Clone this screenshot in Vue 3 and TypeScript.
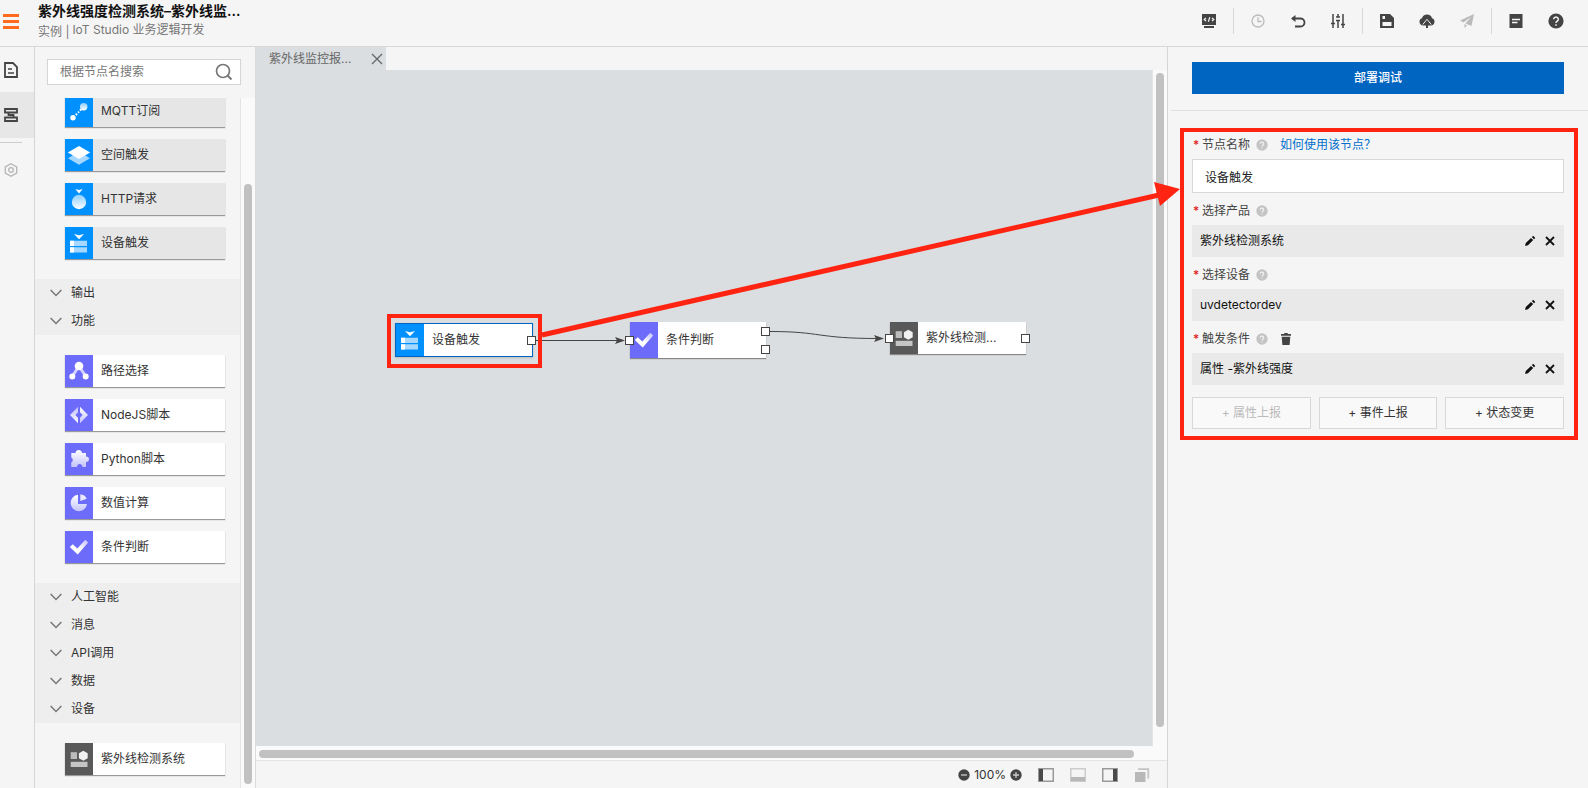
<script setup lang="ts">
import { ref } from 'vue'

interface PaletteNode {
  label: string
  icon: string
  tone: 'blue' | 'purple' | 'dark'
}
interface Group {
  titles: string[]
  nodes: PaletteNode[]
}
interface Port {
  x: number
  y: number
}
interface FlowNode extends PaletteNode {
  x: number
  y: number
  height: number
  selected?: boolean
  ports: Port[]
}
interface Field {
  label: string
  value: string
  removable?: boolean
}

const search = ref('')
const nodeName = ref('设备触发')

const groups: Group[] = [
  {
    titles: [],
    nodes: [
      { label: 'MQTT订阅', icon: 'mqtt', tone: 'blue' },
      { label: '空间触发', icon: 'space', tone: 'blue' },
      { label: 'HTTP请求', icon: 'http', tone: 'blue' },
      { label: '设备触发', icon: 'device', tone: 'blue' },
    ],
  },
  {
    titles: ['输出', '功能'],
    nodes: [
      { label: '路径选择', icon: 'path', tone: 'purple' },
      { label: 'NodeJS脚本', icon: 'code', tone: 'purple' },
      { label: 'Python脚本', icon: 'puzzle', tone: 'purple' },
      { label: '数值计算', icon: 'pie', tone: 'purple' },
      { label: '条件判断', icon: 'check', tone: 'purple' },
    ],
  },
  {
    titles: ['人工智能', '消息', 'API调用', '数据', '设备'],
    nodes: [{ label: '紫外线检测系统', icon: 'system', tone: 'dark' }],
  },
]

const flow: FlowNode[] = [
  { label: '设备触发', icon: 'device', tone: 'blue', x: 139, y: 253, height: 34, selected: true, ports: [{ x: 132, y: 13 }] },
  { label: '条件判断', icon: 'check', tone: 'purple', x: 374, y: 252, height: 36, ports: [{ x: -5, y: 14 }, { x: 131, y: 5 }, { x: 131, y: 23 }] },
  { label: '紫外线检测...', icon: 'system', tone: 'dark', x: 634, y: 252, height: 32, ports: [{ x: -5, y: 12 }, { x: 131, y: 12 }] },
]

const toolbar = [
  [{ icon: 'monitor', label: '预览', off: false }],
  [
    { icon: 'clock', label: '历史', off: true },
    { icon: 'undo', label: '撤销', off: false },
    { icon: 'sliders', label: '配置', off: false },
  ],
  [
    { icon: 'save', label: '保存', off: false },
    { icon: 'cloud', label: '部署', off: false },
    { icon: 'plane', label: '发布', off: true },
  ],
  [
    { icon: 'note', label: '文档', off: false },
    { icon: 'help', label: '帮助', off: false },
  ],
]

const fields: Field[] = [
  { label: '选择产品', value: '紫外线检测系统' },
  { label: '选择设备', value: 'uvdetectordev' },
  { label: '触发条件', value: '属性 -紫外线强度', removable: true },
]

const views = [
  { icon: 'left', label: '左侧面板', off: false },
  { icon: 'bottom', label: '底部面板', off: true },
  { icon: 'right', label: '右侧面板', off: false },
  { icon: 'copy', label: '窗口', off: true },
]
</script>

<template>
  <div class="app">
    <svg class="sprite" aria-hidden="true">
      <defs>
        <linearGradient id="g-down" x1="0" y1="0" x2="0" y2="1">
          <stop offset="0" stop-color="#fff" />
          <stop offset="1" stop-color="#fff" stop-opacity="0.6" />
        </linearGradient>
        <linearGradient id="g-up" x1="0" y1="1" x2="0" y2="0">
          <stop offset="0" stop-color="#fff" />
          <stop offset="1" stop-color="#fff" stop-opacity="0.55" />
        </linearGradient>
        <linearGradient id="g-side" x1="0" y1="1" x2="1" y2="0">
          <stop offset="0.45" stop-color="#fff" />
          <stop offset="1" stop-color="#fff" stop-opacity="0.55" />
        </linearGradient>
        <symbol id="i-mqtt" viewBox="0 0 28 32">
          <circle cx="18.7" cy="11.7" r="3.7" fill="url(#g-up)" />
          <circle cx="8" cy="22.8" r="2.7" fill="#fff" />
          <path d="M10.8 20l1.2-1.2M13 17.6l1-1M15 15.5l1-1" stroke="#fff" stroke-width="2" />
        </symbol>
        <symbol id="i-space" viewBox="0 0 28 32">
          <path d="M14 12.5l11 6.7-11 6.6-11-6.6z" fill="#fff" opacity="0.65" />
          <path d="M14 7l11.2 6.5L14 20 2.8 13.5z" fill="#fff" />
        </symbol>
        <symbol id="i-http" viewBox="0 0 28 32">
          <path d="M10.3 6l3.7 1 3.7-1L14 10.6z" fill="#fff" />
          <circle cx="14" cy="19" r="7.2" fill="url(#g-up)" />
        </symbol>
        <symbol id="i-device" viewBox="0 0 28 32">
          <path d="M9 7l5 1.3L19 7l-5 5.3z" fill="#fff" />
          <path d="M5 13.7h17v5.4H5zM5 20.2h17v5.3H5z" fill="#fff" opacity="0.65" />
          <path d="M5 13.7h4v5.4H5zM5 20.2h4v5.3H5z" fill="#fff" />
        </symbol>
        <symbol id="i-path" viewBox="0 0 28 32">
          <path d="M14 11L7.5 21M14 11l6.5 10" stroke="#fff" stroke-opacity="0.7" stroke-width="3" />
          <circle cx="14" cy="11" r="4.3" fill="#fff" />
          <circle cx="7.3" cy="21.5" r="3" fill="#fff" />
          <circle cx="20.7" cy="21.5" r="3" fill="#fff" />
        </symbol>
        <symbol id="i-code" viewBox="0 0 28 32">
          <path d="M13 7.8v5.5L10.4 16l2.6 2.7v5.5L5 16z" fill="url(#g-up)" />
          <path d="M15 7.8v5.5l2.6 2.7-2.6 2.7v5.5L23 16z" fill="url(#g-down)" />
        </symbol>
        <symbol id="i-puzzle" viewBox="0 0 28 32">
          <path d="M6.3 10h4.2c0-4 6.5-4 6.500 0h4v3.500c4 0 4 5.500 0 5.500v5h-3.600c0-4-5.400-4-5.400 0H6.300v-4.500c2-1 2-4 0-5z" fill="url(#g-down)" />
        </symbol>
        <symbol id="i-pie" viewBox="0 0 28 32">
          <path d="M13 7.800V17h9a8.200 8.200 0 1 1-9-9.200z" fill="url(#g-down)" />
          <path d="M15.300 7.300V14l6.400-2.200c-1-2.700-3.400-4.300-6.400-4.500z" fill="#fff" opacity="0.850" />
        </symbol>
        <symbol id="i-check" viewBox="0 0 28 32">
          <path d="M4.800 16l3-2.800 4.500 4.300 8-8.700 2.900 2.700-10.500 11.900z" fill="url(#g-side)" />
        </symbol>
        <symbol id="i-system" viewBox="0 0 28 32">
          <path d="M5.700 9.200H12V16H5.700z" fill="#fff" opacity="0.600" />
          <path d="M18.300 7.700l4.400 2.500v5l-4.400 2.500-4.400-2.500v-5z" fill="#fff" opacity="0.920" />
          <path d="M5.700 18.800h16.800V24H5.700z" fill="#fff" opacity="0.650" />
        </symbol>

        <symbol id="i-monitor" viewBox="0 0 16 16">
          <path d="M1 1h14v11H1z" fill="currentColor" />
          <path d="M3 13h10v2H3z" fill="currentColor" />
          <path d="M5 5L3.200 6.500 5 8M11 5l1.800 1.500L11 8M8.800 4.300L7.300 8.700" fill="none" stroke="#f5f5f5" stroke-width="1.200" />
          <path d="M1 12.500h14" stroke="#f5f5f5" stroke-width="0.800" />
        </symbol>
        <symbol id="i-clock" viewBox="0 0 16 16">
          <circle cx="8" cy="8" r="6" fill="none" stroke="currentColor" stroke-width="1.300" />
          <path d="M8 4.300V8.500h3.500" fill="none" stroke="currentColor" stroke-width="1.300" />
        </symbol>
        <symbol id="i-undo" viewBox="0 0 16 16">
          <path d="M2.500 5.500h8a4 4 0 0 1 0 8H5" fill="none" stroke="currentColor" stroke-width="1.800" />
          <path d="M5.500 2L1 5.500 5.500 9z" fill="currentColor" />
        </symbol>
        <symbol id="i-sliders" viewBox="0 0 16 16">
          <path d="M3 1v14M8 1v3M8 7.500V15M13 1v14" stroke="currentColor" stroke-width="1.500" />
          <path d="M1 10.500h4M6 7.500h4M11 11.500h4M6 4h4" stroke="currentColor" stroke-width="1.600" />
        </symbol>
        <symbol id="i-save" viewBox="0 0 16 16">
          <path d="M1 1h10l4 4v10H1z" fill="currentColor" />
          <path d="M3.500 3h2.500v3H3.500zM3.500 9h9v4h-9z" fill="#f5f5f5" />
        </symbol>
        <symbol id="i-cloud" viewBox="0 0 16 16">
          <path d="M4 12.500A3.700 3.700 0 0 1 3 5.300 5.200 5.200 0 0 1 13 5.300a3.700 3.700 0 0 1-1 7.200z" fill="currentColor" />
          <path d="M3.800 11.500L8 6.300l4.200 5.200" fill="none" stroke="#f5f5f5" stroke-width="1" />
          <path d="M8 7.500l3 4H5zM7 10h2v5H7z" fill="currentColor" />
        </symbol>
        <symbol id="i-plane" viewBox="0 0 16 16">
          <path d="M15 1L1 7.500l3.500 2L12 4l-5.500 6.500 6 2.500zM5.500 11v4l2.500-2.500z" fill="currentColor" />
        </symbol>
        <symbol id="i-note" viewBox="0 0 16 16">
          <path d="M1.500 1h13v14h-13z" fill="currentColor" />
          <path d="M4 6.500h8M4 9.500h5.500" stroke="#f5f5f5" stroke-width="1.300" />
        </symbol>
        <symbol id="i-help" viewBox="0 0 16 16">
          <circle cx="8" cy="8" r="7.600" fill="currentColor" />
          <path d="M5.700 6.300a2.300 2.200 0 1 1 3.500 1.900c-.800.500-1.200.800-1.200 1.800M8 11.200v1.600" fill="none" stroke="#f5f5f5" stroke-width="1.500" />
        </symbol>

        <symbol id="i-doc" viewBox="0 0 16 18">
          <path d="M2 2h8l4 4v10H2z" fill="none" stroke="currentColor" stroke-width="1.800" />
          <path d="M5 8h4M5 12h6" stroke="currentColor" stroke-width="1.400" />
        </symbol>
        <symbol id="i-flow" viewBox="0 0 16 18">
          <path d="M2 3h12v3.500H2zM2 11.500h12V15H2zM5.500 6.500V9h5v2.500" fill="none" stroke="currentColor" stroke-width="1.800" />
        </symbol>
        <symbol id="i-hex" viewBox="0 0 16 18">
          <path d="M8 2.700l5.700 3.200v6.200L8 15.300l-5.700-3.200V5.900z" fill="none" stroke="currentColor" stroke-width="1.300" />
          <circle cx="8" cy="9" r="2.300" fill="none" stroke="currentColor" stroke-width="1.300" />
        </symbol>

        <symbol id="i-left" viewBox="0 0 16 14">
          <path d="M.750.750h14.500v12.500H.750z" fill="none" stroke="#999" stroke-width="1.500" />
          <path d="M1 1h4v12H1z" fill="#4a4a4a" />
        </symbol>
        <symbol id="i-right" viewBox="0 0 16 14">
          <path d="M.750.750h14.500v12.500H.750z" fill="none" stroke="#999" stroke-width="1.500" />
          <path d="M11 1h4v12h-4z" fill="#4a4a4a" />
        </symbol>
        <symbol id="i-bottom" viewBox="0 0 16 14">
          <path d="M.750.750h14.500v12.500H.750z" fill="none" stroke="#ccc" stroke-width="1.500" />
          <path d="M1 9h14v4H1z" fill="#b8b8b8" />
        </symbol>
        <symbol id="i-copy" viewBox="0 0 16 14">
          <path d="M1 4h10.500v10H1z" fill="#b8b8b8" />
          <path d="M4 1.200h10.300v9.300" fill="none" stroke="#c4c4c4" stroke-width="1.800" />
        </symbol>
        <symbol id="i-pencil" viewBox="0 0 12 12">
          <path d="M1 11l.800-3L7 2.900l2.200 2.200L4 10.200zM7.800 2.100l.900-.900q.500-.400 1 0l1.200 1.200q.400.500 0 1l-.900.900z" fill="currentColor" />
        </symbol>
        <symbol id="i-close" viewBox="0 0 12 12">
          <path d="M2 2l8 8M10 2l-8 8" stroke="currentColor" stroke-width="1.800" />
        </symbol>
        <symbol id="i-trash" viewBox="0 0 12 12">
          <path d="M1 1h3l.500-1h3L8 1h3v1.800H1zM1.700 3.700h8.600L9.600 12H2.400z" fill="currentColor" />
        </symbol>
      </defs>
    </svg>

    <header class="top">
      <button class="menu" aria-label="菜单"><i></i><i></i><i></i></button>
      <div class="heading">
        <h1>紫外线强度检测系统–紫外线监...</h1>
        <p><span>实例 |</span><span class="product">IoT Studio 业务逻辑开发</span></p>
      </div>
      <div class="toolbar">
        <div v-for="(set, i) in toolbar" :key="i" class="tools">
          <button v-for="t in set" :key="t.icon" :class="{ off: t.off }" :aria-label="t.label">
            <svg width="16" height="16"><use :href="'#i-' + t.icon" /></svg>
          </button>
        </div>
      </div>
    </header>

    <div class="body">
      <nav class="rail">
        <button aria-label="页面"><svg width="16" height="18"><use href="#i-doc" /></svg></button>
        <button class="active" aria-label="节点"><svg width="16" height="18"><use href="#i-flow" /></svg></button>
        <hr />
        <button class="dim" aria-label="设置"><svg width="16" height="18"><use href="#i-hex" /></svg></button>
      </nav>

      <aside class="palette">
        <div class="search">
          <input v-model="search" type="text" placeholder="根据节点名搜索" aria-label="根据节点名搜索" />
          <svg width="18" height="18" viewBox="0 0 18 18">
            <circle cx="8" cy="8" r="6.500" fill="none" stroke="#777" stroke-width="1.700" />
            <path d="M12.500 12.500l4 4" stroke="#777" stroke-width="1.900" />
          </svg>
        </div>
        <div class="scroller">
          <div class="list">
            <section v-for="(g, i) in groups" :key="i">
              <button v-for="t in g.titles" :key="t" class="category">
                <svg width="12" height="8" viewBox="0 0 12 8"><path d="M.600 1L6 6.500 11.400 1" fill="none" stroke="#777" stroke-width="1.500" /></svg>
                {{ t }}
              </button>
              <ul>
                <li v-for="n in g.nodes" :key="n.label" class="card" :class="n.tone">
                  <span class="tile"><svg width="28" height="32"><use :href="'#i-' + n.icon" /></svg></span>
                  <span class="name">{{ n.label }}</span>
                </li>
              </ul>
            </section>
          </div>
          <div class="vtrack"><div class="thumb side"></div></div>
        </div>
      </aside>

      <main class="workspace">
        <div class="tabs">
          <div class="tab">
            <span>紫外线监控报...</span>
            <button aria-label="关闭"><svg width="12" height="12" viewBox="0 0 12 12"><path d="M1 1l10 10M11 1L1 11" stroke="#666" stroke-width="1.300" /></svg></button>
          </div>
        </div>
        <div class="stage">
          <div class="canvas">
            <svg class="wires" width="896" height="400" viewBox="0 0 896 400">
              <path d="M280 270.500h82" />
              <path d="M514 261.500C566 261.500 560 268.500 622 268.500" />
              <path class="head" d="M369 270.500l-10-3.500 2 3.500-2 3.500zM628 268.500l-10-3.500 2 3.500-2 3.500z" />
            </svg>
            <div
              v-for="n in flow"
              :key="n.label"
              class="node"
              :class="[n.tone, { selected: n.selected }]"
              :style="{ left: n.x + 'px', top: n.y + 'px', height: n.height + 'px' }"
            >
              <span class="tile"><svg width="28" height="32"><use :href="'#i-' + n.icon" /></svg></span>
              <span class="name">{{ n.label }}</span>
              <i v-for="(p, k) in n.ports" :key="k" class="port" :style="{ left: p.x + 'px', top: p.y + 'px' }"></i>
            </div>
            <div class="mark source"></div>
          </div>
          <div class="vtrack"><div class="thumb tall"></div></div>
        </div>
        <div class="htrack"><div class="hthumb"></div></div>
        <footer class="status">
          <div class="zoom">
            <button aria-label="缩小"><svg width="12" height="12" viewBox="0 0 12 12"><circle cx="6" cy="6" r="5.700" fill="#444" /><path d="M3 6h6" stroke="#ccc" stroke-width="1.300" /></svg></button>
            <span>100%</span>
            <button aria-label="放大"><svg width="12" height="12" viewBox="0 0 12 12"><circle cx="6" cy="6" r="5.700" fill="#444" /><path d="M3 6h6M6 3v6" stroke="#ccc" stroke-width="1.300" /></svg></button>
          </div>
          <button v-for="v in views" :key="v.icon" :aria-label="v.label" :disabled="v.off">
            <svg width="16" height="14"><use :href="'#i-' + v.icon" /></svg>
          </button>
        </footer>
      </main>

      <aside class="props">
        <div class="deploy"><button>部署调试</button></div>
        <form class="form" @submit.prevent>
          <div class="label">
            <b>*</b><label for="node-name">节点名称</label>
            <svg class="tip" width="12" height="12"><use href="#i-help" /></svg>
            <a href="#">如何使用该节点？</a>
          </div>
          <input id="node-name" v-model="nodeName" type="text" />
          <template v-for="f in fields" :key="f.label">
            <div class="label">
              <b>*</b><span>{{ f.label }}</span>
              <svg class="tip" width="12" height="12"><use href="#i-help" /></svg>
              <button v-if="f.removable" class="trash" type="button" aria-label="删除"><svg width="12" height="12"><use href="#i-trash" /></svg></button>
            </div>
            <div class="value">
              <span>{{ f.value }}</span>
              <button type="button" aria-label="编辑"><svg width="12" height="12"><use href="#i-pencil" /></svg></button>
              <button type="button" aria-label="清除"><svg width="12" height="12"><use href="#i-close" /></svg></button>
            </div>
          </template>
          <div class="adders">
            <button type="button" disabled>+ 属性上报</button>
            <button type="button">+ 事件上报</button>
            <button type="button">+ 状态变更</button>
          </div>
          <div class="mark target"></div>
          <svg class="arrow" width="640" height="170" viewBox="0 0 640 170">
            <path d="M1 155L618 15" stroke="#ff2412" stroke-width="5" />
            <path d="M639 9l-26-7 6 24z" fill="#ff2412" />
          </svg>
        </form>
      </aside>
    </div>
  </div>
</template>

<style>
body {
  margin: 0;
  background: #f5f5f5;
}
</style>

<style scoped>
.app {
  display: flex;
  flex-direction: column;
  height: 100vh;
  overflow: hidden;
  background: #f5f5f5;
  color: #333;
  font: 12px/18px Inter, "Noto Sans CJK SC", sans-serif;
}
.app * {
  box-sizing: border-box;
}
.sprite {
  position: absolute;
  width: 0;
  height: 0;
}
svg {
  display: block;
  flex: none;
}
button {
  padding: 0;
  border: 0;
  background: none;
  color: inherit;
  font: inherit;
  cursor: pointer;
}
input {
  font: inherit;
  outline: 0;
}
.top {
  display: flex;
  flex: none;
  height: 47px;
  border-bottom: 1px solid #d8d8d8;
}
.menu {
  display: flex;
  flex-direction: column;
  gap: 3px;
  width: 16px;
  margin: 14px 19px 0 3px;
  align-self: flex-start;
}
.menu i {
  height: 3px;
  background: #ff6a1f;
}
.heading h1 {
  margin: 1px 0 0;
  color: #111;
  font-size: 14px;
  line-height: 20px;
  font-weight: 600;
}
.heading p {
  display: flex;
  gap: 3px;
  margin: 0;
  color: #777;
}
.heading p span:first-child {
  padding-top: 2px;
}
.product {
  color: #777;
}
.toolbar {
  display: flex;
  align-items: center;
  height: 26px;
  margin: 8px 24px 0 auto;
  color: #444;
}
.tools {
  display: flex;
  align-items: center;
  gap: 24px;
  height: 26px;
}
.tools + .tools {
  margin-left: 16px;
  padding-left: 16px;
  border-left: 1px solid #d8d8d8;
}
.off {
  color: #bbb;
}
.body {
  display: flex;
  flex: 1;
  min-height: 0;
}
.rail {
  display: flex;
  flex-direction: column;
  width: 35px;
  flex: none;
  border-right: 1px solid #d5d5d5;
  color: #444;
}
.rail button {
  height: 45px;
  padding-left: 3px;
}
.rail .active {
  background: #e7e7e7;
  height: 46px;
}
.rail hr {
  width: 22px;
  height: 1px;
  margin: 4px 0;
  border: 0;
  background: #ccc;
}
.rail .dim {
  color: #b5b5b5;
}
.palette {
  display: flex;
  flex-direction: column;
  width: 220px;
  flex: none;
}
.search {
  display: flex;
  align-items: center;
  flex: none;
  height: 26px;
  margin: 12px 14px 13px 12px;
  padding-right: 7px;
  border: 1px solid #d5d5d5;
  background: #fff;
}
.search input {
  flex: 1;
  min-width: 0;
  padding: 0 0 0 12px;
  border: 0;
  background: none;
}
.search input::placeholder {
  color: #777;
  opacity: 1;
}
.scroller {
  display: flex;
  flex: 1;
  min-height: 0;
}
.list {
  flex: 1;
  overflow: hidden;
}
.list section:first-child {
  margin-top: -23px;
}
.category {
  display: flex;
  align-items: center;
  gap: 9px;
  width: 100%;
  height: 28px;
  padding-left: 15px;
  background: #eee;
}
.list ul {
  display: flex;
  flex-direction: column;
  gap: 12px;
  margin: 0;
  padding: 20px 15px 20px 30px;
  list-style: none;
}
.card {
  display: flex;
  height: 32px;
  background: #fff;
  box-shadow: 0 1px 1px #999;
}
.card.blue {
  background: #e6e6e6;
}
.tile {
  display: flex;
  align-items: center;
  justify-content: center;
  width: 28px;
  flex: none;
}
.blue .tile {
  background: #0091ff;
}
.purple .tile {
  background: #6d6bfa;
}
.dark .tile {
  background: #595959;
}
.name {
  align-self: center;
  padding-left: 8px;
}
.vtrack {
  width: 15px;
  flex: none;
  border-left: 1px solid #e4e4e4;
  background: #fafafa;
}
.thumb {
  width: 8px;
  margin-left: 3px;
  border-radius: 4px;
  background: #c1c1c1;
}
.side {
  height: calc(100% - 90px);
  margin-top: 86px;
}
.tall {
  height: calc(100% - 22px);
  margin-top: 3px;
}
.workspace {
  display: flex;
  flex-direction: column;
  flex: 1;
  min-width: 0;
  border-left: 1px solid #d8dcdf;
}
.tabs {
  display: flex;
  height: 23px;
  flex: none;
}
.tab {
  display: flex;
  align-items: center;
  justify-content: space-between;
  width: 130px;
  padding: 0 3px 0 13px;
  background: #dadee1;
  color: #666;
}
.stage {
  display: flex;
  flex: 1;
  min-height: 0;
}
.canvas {
  position: relative;
  flex: 1;
  min-width: 0;
  overflow: hidden;
  background: #dadee1;
}
.wires {
  position: absolute;
  left: 0;
  top: 0;
  fill: none;
  stroke: #444;
}
.head {
  fill: #444;
  stroke: none;
}
.node {
  position: absolute;
  display: flex;
  width: 136px;
  background: #fff;
  box-shadow: 0 1px 1px #888;
}
.node.selected {
  width: 138px;
  border: 1px solid #0064c1;
  box-shadow: 0 1px 2px #bbb;
}
.selected .port {
  margin: -1px;
}
.port {
  position: absolute;
  width: 9px;
  height: 9px;
  border: 1px solid #444;
  background: #fff;
}
.mark {
  position: absolute;
  border: 4px solid #ff2412;
  pointer-events: none;
}
.source {
  left: 131px;
  top: 244px;
  width: 155px;
  height: 54px;
}
.htrack {
  flex: none;
  height: 15px;
  padding: 4px 33px 0 3px;
  border-bottom: 1px solid #e4e4e4;
  background: #fafafa;
}
.hthumb {
  height: 8px;
  border-radius: 4px;
  background: #c1c1c1;
}
.status {
  display: flex;
  align-items: center;
  justify-content: flex-end;
  gap: 16px;
  flex: none;
  height: 27px;
  padding-right: 17px;
}
.zoom {
  display: flex;
  align-items: center;
  gap: 4px;
}
.props {
  width: 421px;
  flex: none;
  border-left: 1px solid #d5d5d5;
}
.deploy {
  margin-left: 3px;
  padding: 15px 24px 16px 21px;
  border-bottom: 1px solid #e0e0e0;
}
.deploy button {
  width: 100%;
  height: 32px;
  background: #0064c1;
  color: #fff;
  font-weight: 500;
}
.form {
  position: relative;
  padding: 16px 24px 0;
}
.form > input {
  display: block;
  width: 100%;
  height: 34px;
  padding: 0 12px;
  border: 1px solid #d8d8d8;
  background: #fff;
  color: #222;
}
.label {
  display: flex;
  align-items: center;
  height: 32px;
  padding-top: 3px;
  color: #444;
}
.label b {
  width: 10px;
  padding-left: 1px;
  color: #e02020;
  font-weight: 500;
}
.tip {
  margin-left: 6px;
  color: #c4c4c4;
}
.label a {
  margin-left: 12px;
  color: #0070cc;
  text-decoration: none;
}
.trash {
  margin-left: 12px;
}
.value {
  display: flex;
  align-items: center;
  gap: 8px;
  height: 32px;
  padding: 0 8px;
  background: #e9e9e9;
  color: #111;
}
.value span {
  flex: 1;
}
.adders {
  display: grid;
  grid-template-columns: repeat(3, 1fr);
  gap: 8px;
  margin-top: 12px;
}
.adders button {
  height: 32px;
  border: 1px solid #d8d8d8;
  background: #f9f9f9;
}
.adders button:disabled {
  color: #bbb;
}
.target {
  left: 12px;
  right: 10px;
  top: 17px;
  bottom: -11px;
}
.arrow {
  position: absolute;
  left: -627px;
  top: 69px;
  pointer-events: none;
}
</style>
